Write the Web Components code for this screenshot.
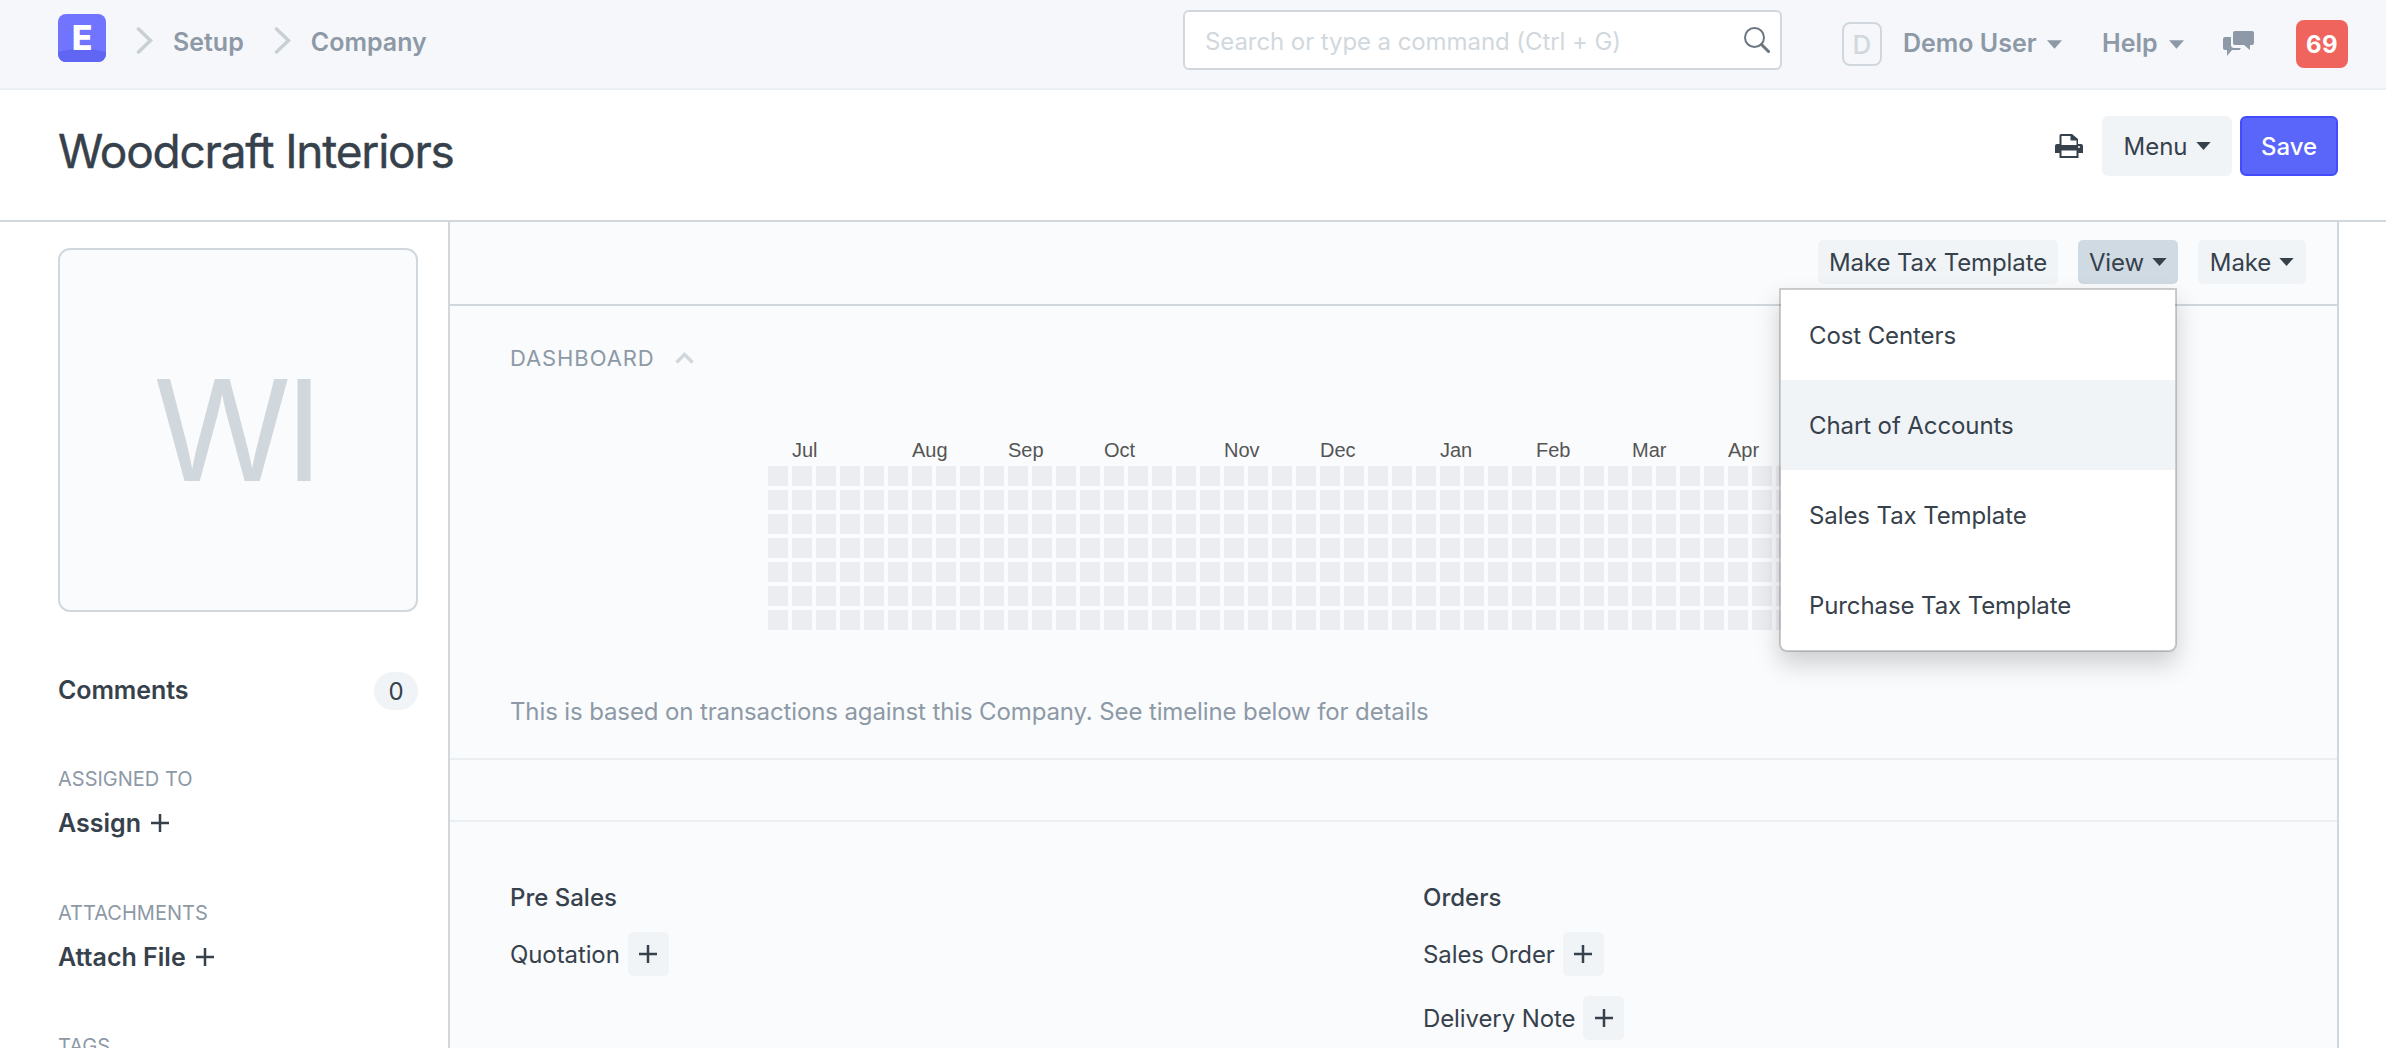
<!DOCTYPE html>
<html>
<head>
<meta charset="utf-8">
<title>Woodcraft Interiors</title>
<style>
  html, body { margin: 0; height: 1048px; overflow: hidden; background: #fff; }
  body { font-family: Inter, "Liberation Sans", sans-serif; color: #36414c; }
</style>
</head>
<body>
<app-navbar></app-navbar>
<page-head title-text="Woodcraft Interiors"></page-head>
<form-layout>
  <form-sidebar slot="side"></form-sidebar>
  <form-toolbar slot="main"></form-toolbar>
  <dash-section slot="main"></dash-section>
  <links-section slot="main"></links-section>
</form-layout>

<script>
(function () {

  const CARET = (w, h, color) => `<svg width="${w}" height="${h}" viewBox="0 0 16 9" style="display:block"><path d="M0 0h16L8 9z" fill="${color}"/></svg>`;
  const PLUS = `<svg width="18" height="18" viewBox="0 0 18 18" style="display:block"><path d="M9 0v18M0 9h18" stroke="#36414c" stroke-width="2.500"/></svg>`;

  // ====== NAVBAR ======
  class AppNavbar extends HTMLElement {
    constructor() {
      super();
      this.attachShadow({ mode: "open" });
    }
    connectedCallback() {
      const chevron = `<svg class="chev" width="17" height="27" viewBox="0 0 17 27"><path d="M2.500 2 14.500 13.500 2.500 25" fill="none" stroke="#c8d0d5" stroke-width="3.500" stroke-linecap="round"/></svg>`;
      this.shadowRoot.innerHTML = `
        <style>
          :host { display: flex; align-items: flex-start; height: 88px; padding: 0 38px 0 58px; background: #f5f7fa; border-bottom: 2px solid #ebeff2; font-size: 25px; font-weight: 600; color: #8d99a6; }
          .left { flex: 1; display: flex; align-items: flex-start; }
          .left span.crumb { margin-top: 27px; line-height: 30px; }
          .logo { flex: none; position: relative; overflow: hidden; margin-top: 14px; width: 48px; height: 48px; border-radius: 8px; background: #7074ff; color: #fff; font-size: 34px; font-weight: 800; display: flex; align-items: center; justify-content: center; line-height: 1; }
          .logo svg { position: absolute; left: 0; bottom: 0; }
          .logo span { position: relative; }
          .chev { flex: none; display: block; margin: 27px 20px 0 30px; }
          .search { flex: none; width: 599px; height: 60px; margin-top: 10px; box-sizing: border-box; border: 2px solid #d1d8dd; border-radius: 6px; background: #fff; display: flex; align-items: center; padding: 0 10px 0 20px; font-size: 24px; letter-spacing: -.08px; font-weight: 400; color: #d1d8dd; }
          .search span { flex: 1; padding-top: 2px; }
          .right { flex: none; width: 506px; height: 88px; margin-left: 60px; display: flex; align-items: center; }
          .avatar { flex: none; width: 40px; height: 44px; box-sizing: border-box; border: 2px solid #d1d8dd; border-radius: 8px; display: flex; align-items: center; justify-content: center; color: #d1d8dd; font-size: 26px; font-weight: 500; margin-right: 21px; }
          .name { width: 132px; white-space: nowrap; margin-bottom: 2px; }
          .caret { margin-left: 12px; }
          .help { width: 55px; margin-left: 40px; margin-bottom: 2px; }
          .chat { flex: none; margin-left: 39px; margin-right: 42px; margin-bottom: 2px; display: block; }
          .badge { flex: none; width: 52px; height: 48px; border-radius: 8px; background: #f0645e; color: #fff; font-size: 24px; font-weight: 700; display: flex; align-items: center; justify-content: center; letter-spacing: .5px; }
        </style>
        <div class="left">
          <div class="logo">
            <svg width="48" height="14" viewBox="0 0 48 14"><path d="M0 14V4Q24-3 48 4V14z" fill="#6066f2"/></svg>
            <span>E</span>
          </div>
          ${chevron}<span class="crumb">Setup</span>
          ${chevron}<span class="crumb">Company</span>
        </div>
        <div class="search">
          <span>Search or type a command (Ctrl + G)</span>
          <svg width="26" height="26" viewBox="0 0 26 26"><circle cx="10.500" cy="10.500" r="9.500" fill="none" stroke="#6c7680" stroke-width="2"/><path d="M17.500 17.500l7 7" stroke="#6c7680" stroke-width="3" stroke-linecap="round"/></svg>
        </div>
        <div class="right">
          <div class="avatar">D</div>
          <span class="name">Demo User</span>
          <span class="caret">${CARET(15, 9, "#8d99a6")}</span>
          <span class="help">Help</span>
          <span class="caret">${CARET(15, 9, "#8d99a6")}</span>
          <svg class="chat" width="31" height="26" viewBox="0 0 31 26"><path fill="#8d99a6" d="M12 1h17a2 2 0 0 1 2 2v10a2 2 0 0 1-2 2h-2v5l-6-5h-9a2 2 0 0 1-2-2V3a2 2 0 0 1 2-2z"/><path fill="#8d99a6" d="M2 7h6v8a3 3 0 0 0 3 3h7l-1.500 2H9l-5 6v-6H2a2 2 0 0 1-2-2V9a2 2 0 0 1 2-2z"/></svg>
          <div class="badge">69</div>
        </div>
      `;
    }
  }

  // ====== PAGE HEAD ======
  class PageHead extends HTMLElement {
    constructor() {
      super();
      this.attachShadow({ mode: "open" });
    }
    connectedCallback() {
      this.shadowRoot.innerHTML = `
        <style>
          :host { display: flex; align-items: flex-start; height: 130px; padding: 0 48px 0 58px; background: #fff; border-bottom: 2px solid #d1d8dd; }
          h1 { flex: 1; margin: 33px 0 0; font-size: 46px; line-height: 56px; font-weight: 400; color: #36414c; letter-spacing: -1.200px; -webkit-text-stroke: .4px #36414c; }
          .print { display: block; margin: 44px 19px 0 0; }
          .btn { height: 60px; margin-top: 26px; box-sizing: border-box; border-radius: 6px; display: flex; align-items: center; font-size: 24px; }
          .menu { width: 130px; justify-content: center; gap: 8px; background: #f0f4f7; color: #36414c; margin-right: 8px; }
          .save { width: 98px; justify-content: center; background: #5966f9; border: 2px solid #444bff; color: #fff; font-weight: 500; }
        </style>
        <h1>${this.getAttribute("title-text")}</h1>
        <svg class="print" width="28" height="24" viewBox="0 0 28 24"><path fill="#36414c" fill-rule="evenodd" d="M6 0H17L23 5V10H26a2 2 0 0 1 2 2V19H23.500V24H4.500V19H0V12a2 2 0 0 1 2-2H4.500V1.500A1.500 1.500 0 0 1 6 0zM6.500 2V11H21.500V6.500H15.500V2zM6.500 16.500V22H21.500V16.500z"/><circle cx="24" cy="13" r="1" fill="#fff"/></svg>
        <div class="btn menu">Menu ${CARET(15, 8, "#36414c")}</div>
        <div class="btn save">Save</div>
      `;
    }
  }

  // ====== LAYOUT ======
  class FormLayout extends HTMLElement {
    constructor() {
      super();
      this.attachShadow({ mode: "open" });
      this.shadowRoot.innerHTML = `
        <style>
          :host { display: flex; background: #fff; }
          .side { width: 448px; flex: none; }
          .main { width: 1891px; height: 826px; flex: none; box-sizing: border-box; background: #fafbfc; border-left: 2px solid #d1d8dd; border-right: 2px solid #d1d8dd; }
        </style>
        <div class="side"><slot name="side"></slot></div>
        <div class="main"><slot name="main"></slot></div>
      `;
    }
  }

  // ====== SIDEBAR ======
  class FormSidebar extends HTMLElement {
    constructor() {
      super();
      this.attachShadow({ mode: "open" });
    }
    connectedCallback() {
      this.shadowRoot.innerHTML = `
        <style>
          :host { display: block; padding: 26px 30px 0 58px; }
          .image { height: 364px; box-sizing: border-box; padding-right: 6px; border: 2px solid #d1d8dd; border-radius: 12px; background: #fafbfc; display: flex; align-items: center; justify-content: center; font-size: 140px; color: #d1d8dd; letter-spacing: -6px; }
          .comments { display: flex; align-items: center; justify-content: space-between; margin-top: 60px; height: 38px; font-size: 25px; letter-spacing: -.1px; font-weight: 600; color: #36414c; }
          .comments span:first-child { padding-bottom: 2px; }
          .count { width: 44px; height: 38px; border-radius: 19px; background: #f0f4f7; display: flex; align-items: center; justify-content: center; font-weight: 400; font-size: 24px; }
          .label { font-size: 20px; color: #8d99a6; line-height: 24px; }
          .act { display: flex; align-items: center; gap: 10px; font-size: 25px; font-weight: 600; color: #36414c; line-height: 32px; margin-top: 16px; }
          .s1 { margin-top: 57px; }
          .s2 { margin-top: 62px; }
          .s3 { margin-top: 61px; }
        </style>
        <div class="image">WI</div>
        <div class="comments"><span>Comments</span><span class="count">0</span></div>
        <div class="label s1">ASSIGNED TO</div>
        <div class="act">Assign ${PLUS}</div>
        <div class="label s2">ATTACHMENTS</div>
        <div class="act">Attach File ${PLUS}</div>
        <div class="label s3">TAGS</div>
      `;
    }
  }

  // ====== TOOLBAR ======
  class FormToolbar extends HTMLElement {
    constructor() {
      super();
      this.attachShadow({ mode: "open" });
    }
    connectedCallback() {
      const items = ["Cost Centers", "Chart of Accounts", "Sales Tax Template", "Purchase Tax Template"];
      this.shadowRoot.innerHTML = `
        <style>
          :host { display: flex; justify-content: flex-end; gap: 20px; position: relative; height: 84px; box-sizing: border-box; padding: 18px 31px 0 0; border-bottom: 2px solid #d1d8dd; font-size: 24px; letter-spacing: -.1px; }
          .btn { height: 44px; box-sizing: border-box; border-radius: 5px; background: #f0f4f7; display: flex; align-items: center; justify-content: center; gap: 8px; color: #36414c; }
          .tax { width: 240px; }
          .view { width: 100px; background: #d0dae3; }
          .make { width: 108px; }
          .menu { position: absolute; z-index: 5; right: 160px; top: 66px; width: 398px; box-sizing: border-box; background: #fff; border: 2px solid rgba(0,0,0,.18); border-radius: 0 0 8px 8px; box-shadow: 0 12px 24px rgba(0,0,0,.175); background-clip: padding-box; }
          .menu div { height: 90px; display: flex; align-items: center; padding-left: 28px; color: #36414c; }
          .menu .on { background: #f0f4f7; }
        </style>
        <div class="btn tax">Make Tax Template</div>
        <div class="btn view">View ${CARET(15, 8, "#36414c")}</div>
        <div class="btn make">Make ${CARET(15, 8, "#36414c")}</div>
        <div class="menu">
          ${items.map((t, i) => `<div class="${i === 1 ? "on" : ""}">${t}</div>`).join("")}
        </div>
      `;
    }
  }

  // ====== HEATMAP ======
  class HeatMap extends HTMLElement {
    constructor() {
      super();
      this.attachShadow({ mode: "open" });
    }
    connectedCallback() {
      const months = [["Jul", 1], ["Aug", 6], ["Sep", 10], ["Oct", 14], ["Nov", 19], ["Dec", 23], ["Jan", 28], ["Feb", 32], ["Mar", 36], ["Apr", 40]];
      const labels = months.map(m => `<span style="grid-column-start:${m[1] + 1}">${m[0]}</span>`).join("");
      const cells = Array.from({ length: 53 * 7 }, () => "<i></i>").join("");
      this.shadowRoot.innerHTML = `
        <style>
          :host { display: block; width: 1272px; }
          .labels { display: grid; grid-template-columns: repeat(53, 20px); column-gap: 4px; height: 26px; font-family: "Liberation Sans", Arial, sans-serif; font-size: 20px; line-height: 20px; color: #555; }
          .labels span { grid-row: 1; white-space: nowrap; }
          .cells { display: grid; grid-template-columns: repeat(53, 20px); grid-auto-rows: 20px; gap: 4px; }
          i { background: #ebedf0; }
        </style>
        <div class="labels">${labels}</div>
        <div class="cells">${cells}</div>
      `;
    }
  }

  // ====== DASHBOARD ======
  class DashSection extends HTMLElement {
    constructor() {
      super();
      this.attachShadow({ mode: "open" });
    }
    connectedCallback() {
      this.shadowRoot.innerHTML = `
        <style>
          :host { display: block; height: 454px; box-sizing: border-box; padding: 38px 0 0 60px; border-bottom: 2px solid #ebeff2; }
          .head { display: flex; align-items: center; gap: 20px; height: 28px; font-size: 22px; color: #8d99a6; letter-spacing: .9px; }
          heat-map { margin: 68px 0 0 258px; }
          p { margin: 66px 0 0; font-size: 24px; line-height: 32px; letter-spacing: -.12px; color: #8d99a6; }
        </style>
        <div class="head"><span>DASHBOARD</span>
          <svg width="19" height="12" viewBox="0 0 19 12"><path d="M1.500 10.500 9.500 2.500l8 8" fill="none" stroke="#d1d8dd" stroke-width="3.500"/></svg>
        </div>
        <heat-map></heat-map>
        <p>This is based on transactions against this Company. See timeline below for details</p>
      `;
    }
  }

  // ====== LINKS ======
  class DocLink extends HTMLElement {
    constructor() {
      super();
      this.attachShadow({ mode: "open" });
      this.shadowRoot.innerHTML = `
        <style>
          :host { display: flex; align-items: center; gap: 8px; height: 44px; margin-top: 20px; font-size: 24px; letter-spacing: -.1px; color: #36414c; }
          b { width: 41px; height: 44px; border-radius: 5px; background: #f0f4f7; display: flex; align-items: center; justify-content: center; }
        </style>
        <slot></slot>
        <b>${PLUS}</b>
      `;
    }
  }

  class LinksSection extends HTMLElement {
    constructor() {
      super();
      this.attachShadow({ mode: "open" });
    }
    connectedCallback() {
      this.shadowRoot.innerHTML = `
        <style>
          :host { display: block; margin-top: 60px; padding: 60px 0 0 60px; border-top: 2px solid #ebeff2; }
          .cols { display: grid; grid-template-columns: 913px 1fr; }
          h4 { margin: 0; height: 30px; font-size: 24px; line-height: 32px; font-weight: 500; color: #36414c; }
        </style>
        <div class="cols">
          <div><h4>Pre Sales</h4><doc-link>Quotation</doc-link></div>
          <div><h4>Orders</h4><doc-link>Sales Order</doc-link><doc-link>Delivery Note</doc-link></div>
        </div>
      `;
    }
  }

  customElements.define("app-navbar", AppNavbar);
  customElements.define("page-head", PageHead);
  customElements.define("form-layout", FormLayout);
  customElements.define("form-sidebar", FormSidebar);
  customElements.define("form-toolbar", FormToolbar);
  customElements.define("heat-map", HeatMap);
  customElements.define("dash-section", DashSection);
  customElements.define("doc-link", DocLink);
  customElements.define("links-section", LinksSection);

})();
</script>
</body>
</html>
